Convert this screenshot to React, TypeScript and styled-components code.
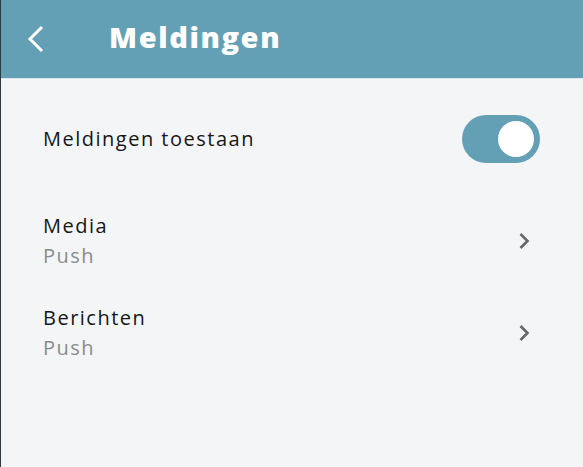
import React, { useState } from "react";
import styled, { createGlobalStyle } from "styled-components";

const Global = createGlobalStyle`
  html, body { margin: 0; padding: 0; background: #f4f5f6; }
  body { font-family: "Open Sans", "Noto Sans", sans-serif; }
  * { box-sizing: border-box; }
`;

const Screen = styled.div`
  width: 583px;
  height: 467px;
  background: #f4f5f6;
  border-left: 1px solid #2b3a40;
  display: flex;
  flex-direction: column;
  overflow: hidden;
`;

const Header = styled.header`
  height: 79px;
  background: #64a0b5;
  display: flex;
  align-items: center;
  padding-left: 25px;
  border-bottom: 1px solid #dfe6ea;
`;

const BackButton = styled.button`
  width: 20px;
  height: 30px;
  padding: 0;
  border: 0;
  background: none;
  display: flex;
  align-items: center;
  justify-content: center;
  cursor: pointer;
  margin-right: 63px;
`;

const Title = styled.h1`
  margin: 0;
  color: #ffffff;
  font-size: 29px;
  font-weight: 800;
  letter-spacing: 1.6px;
  margin-top: -5px;
`;

const Content = styled.main`
  padding: 36px 43px 0 42px;
  display: flex;
  flex-direction: column;
`;

const ToggleRow = styled.div`
  display: flex;
  align-items: center;
  justify-content: space-between;
  height: 48px;
  margin-bottom: 48px;
`;

const NavRow = styled.div`
  display: flex;
  align-items: center;
  justify-content: space-between;
  margin-bottom: 33px;
  padding-right: 10px;
`;

const Label = styled.div`
  color: #161616;
  font-size: 20px;
  line-height: 30px;
  letter-spacing: 1.5px;
`;

const Sub = styled.div`
  color: #8a8b8d;
  font-size: 20px;
  line-height: 29px;
  letter-spacing: 1.5px;
`;

const Switch = styled.button<{ $on: boolean }>`
  width: 78px;
  height: 48px;
  border-radius: 24px;
  border: 0;
  padding: 0 6px;
  background: ${(p) => (p.$on ? "#64a0b5" : "#c9cdd0")};
  display: flex;
  align-items: center;
  justify-content: ${(p) => (p.$on ? "flex-end" : "flex-start")};
  cursor: pointer;
`;

const Knob = styled.span`
  width: 36px;
  height: 36px;
  border-radius: 50%;
  background: #ffffff;
`;

const Chevron = () => (
  <svg width="12" height="18" viewBox="0 0 12 18">
    <polyline points="2.5,2 9.5,9 2.5,16" fill="none" stroke="#666769" strokeWidth="2.6" />
  </svg>
);

export default function App() {
  const [on, setOn] = useState(true);
  return (
    <>
      <Global />
      <Screen>
        <Header>
          <BackButton aria-label="Terug">
            <svg width="20" height="30" viewBox="0 0 20 30">
              <polyline points="16,3 4,15 16,27" fill="none" stroke="#ffffff" strokeWidth="3" />
            </svg>
          </BackButton>
          <Title>Meldingen</Title>
        </Header>
        <Content>
          <ToggleRow>
            <Label>Meldingen toestaan</Label>
            <Switch $on={on} onClick={() => setOn(!on)}>
              <Knob />
            </Switch>
          </ToggleRow>
          <NavRow>
            <div>
              <Label>Media</Label>
              <Sub>Push</Sub>
            </div>
            <Chevron />
          </NavRow>
          <NavRow>
            <div>
              <Label>Berichten</Label>
              <Sub>Push</Sub>
            </div>
            <Chevron />
          </NavRow>
        </Content>
      </Screen>
    </>
  );
}
